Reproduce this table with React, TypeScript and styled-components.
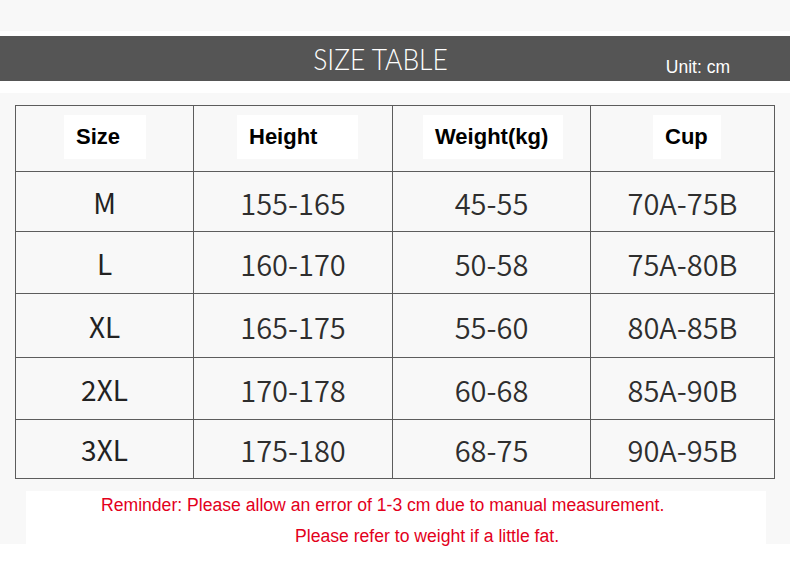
import styled, { createGlobalStyle } from "styled-components";

const GlobalStyle = createGlobalStyle`
  html, body {
    margin: 0;
    padding: 0;
    background: #ffffff;
  }
`;

const Page = styled.div`
  width: 790px;
  display: flex;
  flex-direction: column;
  background: #ffffff;
`;

const TopStrip = styled.div`
  flex-shrink: 0;
  height: 31px;
  margin-bottom: 5px;
  background: #f8f8f8;
`;

const TitleBar = styled.header`
  flex-shrink: 0;
  height: 45px;
  padding-right: 30px;
  display: grid;
  grid-template-columns: 1fr auto 1fr;
  align-items: center;
  background: #555555;
  color: #ffffff;
`;

const Title = styled.h1`
  grid-column: 2;
  margin: 0 0 2px;
  font-family: Lato, "Open Sans", sans-serif;
  font-weight: 300;
  font-size: 30px;
  line-height: 36px;
  transform: scaleX(0.88);
`;

const Unit = styled.span`
  grid-column: 3;
  justify-self: end;
  align-self: end;
  margin: 0 30px 3px 0;
  font-family: "Liberation Sans", Arial, sans-serif;
  font-size: 17.5px;
`;

/* grey panel stops 8px above the reminder card's lower edge */
const Body = styled.main`
  flex-shrink: 0;
  margin-top: 12px;
  padding: 12px 16px 0 15px;
  background: linear-gradient(#f8f8f8 calc(100% - 8px), #ffffff 0);
`;

const Table = styled.table`
  width: 759px;
  border-collapse: collapse;
  table-layout: fixed;
  background: #f8f8f8;
`;

const HeadCell = styled.th<{ $left: number }>`
  padding: 0 0 4px ${(p) => p.$left}px;
  border: 1.5px solid #5c5c5c;
  text-align: left;
  vertical-align: middle;
`;

const HeadLabel = styled.span<{ $w: number }>`
  display: flex;
  align-items: center;
  width: ${(p) => p.$w}px;
  height: 44px;
  padding-left: 12px;
  box-sizing: border-box;
  background: #ffffff;
  font-family: "Liberation Sans", Arial, sans-serif;
  font-weight: 700;
  font-size: 22px;
  color: #000000;
`;

const Row = styled.tr<{ $h: number }>`
  height: ${(p) => p.$h}px;
`;

const Cell = styled.td<{ $size?: boolean }>`
  padding: 0;
  border: 1.5px solid #5c5c5c;
  text-align: center;
  vertical-align: middle;
  font-family: "Noto Sans CJK SC", "Noto Sans", sans-serif;
  font-size: ${(p) => (p.$size ? "28px" : "29px")};
  font-weight: ${(p) => (p.$size ? 400 : 350)};
  color: ${(p) => (p.$size ? "#222222" : "#2e2e2e")};
`;

const Reminder = styled.section`
  margin: 12px 8px 0 11px;
  height: 61px;
  padding-top: 5px;
  box-sizing: border-box;
  display: flex;
  flex-direction: column;
  gap: 12px;
  background: #ffffff;
`;

const Note = styled.p<{ $indent: number }>`
  margin: 0;
  padding-left: ${(p) => p.$indent}px;
  font-family: "Liberation Sans", Arial, sans-serif;
  font-size: 17.6px;
  line-height: 19px;
  white-space: nowrap;
  color: #e3001b;
`;

const heads = [
  { label: "Size", left: 48, w: 82 },
  { label: "Height", left: 43, w: 121 },
  { label: "Weight(kg)", left: 30, w: 140 },
  { label: "Cup", left: 62, w: 68 },
];

const rows = [
  { h: 60, cells: ["M", "155-165", "45-55", "70A-75B"] },
  { h: 62, cells: ["L", "160-170", "50-58", "75A-80B"] },
  { h: 64, cells: ["XL", "165-175", "55-60", "80A-85B"] },
  { h: 62, cells: ["2XL", "170-178", "60-68", "85A-90B"] },
  { h: 59, cells: ["3XL", "175-180", "68-75", "90A-95B"] },
];

export default function App() {
  return (
    <Page>
      <GlobalStyle />
      <TopStrip />
      <TitleBar>
        <Title>SIZE TABLE</Title>
        <Unit>Unit: cm</Unit>
      </TitleBar>
      <Body>
        <Table>
          <colgroup>
            <col style={{ width: 178 }} />
            <col style={{ width: 199 }} />
            <col style={{ width: 198 }} />
            <col style={{ width: 184 }} />
          </colgroup>
          <thead>
            <Row $h={66}>
              {heads.map((h) => (
                <HeadCell key={h.label} $left={h.left}>
                  <HeadLabel $w={h.w}>{h.label}</HeadLabel>
                </HeadCell>
              ))}
            </Row>
          </thead>
          <tbody>
            {rows.map((r) => (
              <Row key={r.cells[0]} $h={r.h}>
                {r.cells.map((c, i) => (
                  <Cell key={i} $size={i === 0}>
                    {c}
                  </Cell>
                ))}
              </Row>
            ))}
          </tbody>
        </Table>
        <Reminder>
          <Note $indent={75}>
            Reminder: Please allow an error of 1-3 cm due to manual measurement.
          </Note>
          <Note $indent={269}>Please refer to weight if a little fat.</Note>
        </Reminder>
      </Body>
    </Page>
  );
}
